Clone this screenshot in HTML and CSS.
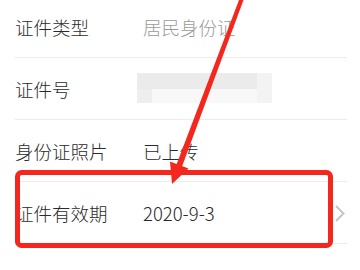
FILE: index.html
```html
<!DOCTYPE html>
<html lang="zh-CN">
<head>
<meta charset="utf-8">
<link rel="stylesheet" href="styles.css">
</head>
<body>
<div class="page">
  <ul class="list">
    <li class="row">
      <span class="label">证件类型</span>
      <span class="value muted">居民身份证</span>
    </li>
    <li class="row">
      <span class="label">证件号</span>
      <span class="mosaic">
        <span class="m m1"></span><span class="m m3"></span>
        <span class="m m4"></span><span class="m m5"></span>
      </span>
    </li>
    <li class="row">
      <span class="label">身份证照片</span>
      <span class="value">已上传</span>
    </li>
    <li class="row">
      <span class="label">证件有效期</span>
      <span class="value">2020-9-3</span>
      <svg class="chevron" width="10" height="17" viewBox="0 0 10 17"><polyline points="1,1 8.5,8.5 1,16" fill="none" stroke="#c6c6c6" stroke-width="2"/></svg>
    </li>
  </ul>
  <svg class="annot" width="360" height="270" viewBox="0 0 360 270">
    <rect x="17.5" y="172.5" width="313" height="73" rx="4" fill="none" stroke="#f3271d" stroke-width="5"/>
    <polygon points="239,0 243.5,0 182,166.5 176.5,164.5" fill="#f3271d"/>
    <polygon points="172,184 170,161.5 188.5,168.5" fill="#f3271d"/>
  </svg>
</div>
</body>
</html>
```
FILE: styles.css
```css
html, body {
  margin: 0;
  padding: 0;
  background: #ffffff;
}
.page {
  position: relative;
  width: 360px;
  height: 270px;
  overflow: hidden;
  font-family: "Noto Sans CJK SC", "Noto Sans", sans-serif;
  font-weight: 300;
}
.list {
  list-style: none;
  margin: -4px 13px 0 15px;
  padding: 0;
}
.row {
  display: flex;
  align-items: center;
  height: 61px;
  border-bottom: 1px solid #ececec;
  padding-right: 2px;
}
.label {
  width: 128px;
  font-size: 18.5px;
  color: #2a2a2a;
  white-space: nowrap;
}
.value {
  font-size: 18.5px;
  color: #2a2a2a;
}
.value.muted {
  color: #9a9a9a;
}
.mosaic {
  display: grid;
  grid-template-columns: 15px 105px 15px;
  grid-template-rows: 16px 14px;
  margin-left: -6px;
  margin-top: -2px;
}
.m1 { grid-column: 1 / 3; grid-row: 1; background: #ebebeb; }
.m3 { grid-column: 3; grid-row: 1 / 3; background: #f3f3f3; }
.m4 { grid-column: 1; grid-row: 2; background: #eeeeee; }
.m5 { grid-column: 2; grid-row: 2; background: #f8f8f8; }
.chevron {
  margin-left: auto;
  margin-top: 1px;
}
.annot {
  position: absolute;
  left: 0;
  top: 0;
}
```
